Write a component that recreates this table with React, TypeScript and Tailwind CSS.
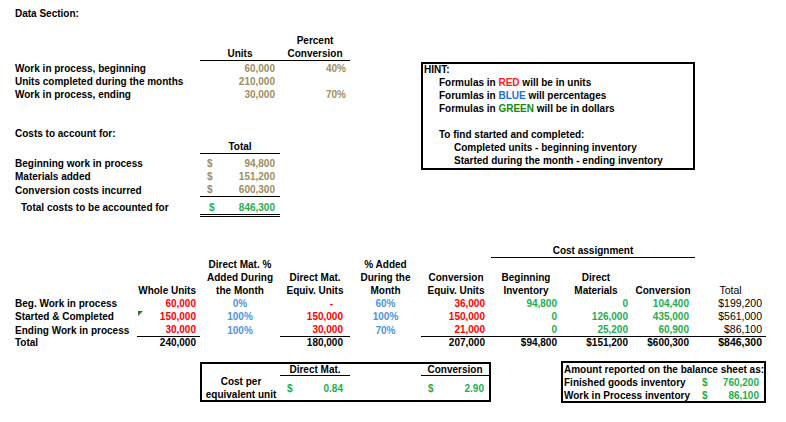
import type { ReactNode } from 'react';

const GRID = 'grid grid-cols-[137px_63px_80px_70px_71px_70px_70px_70px_64px_71px]';
const TOP = 'grid grid-cols-[200px_80px_70px]';

const Cell = ({ className = '', children }: { className?: string; children?: ReactNode }) => (
  <div className={`flex items-center whitespace-nowrap ${className}`}>{children}</div>
);

const UnitRow = ({ h, label, units, pct }: { h: string; label: string; units: string; pct?: string }) => (
  <div className={`${TOP} ${h}`}>
    <Cell className="pl-[15px]">{label}</Cell>
    <Cell className="justify-end pr-[5px] text-[#9c8e5e]">{units}</Cell>
    <Cell className="justify-end pr-[4px] text-[#9c8e5e]">{pct}</Cell>
  </div>
);

const CostRow = ({ h, label, value, line }: { h: string; label: string; value: string; line?: boolean }) => (
  <div className={`${TOP} ${h}`}>
    <Cell className="pl-[15px]">{label}</Cell>
    <Cell className={`justify-between pl-[7px] pr-[5px] text-[#9c8e5e] ${line ? 'border-b border-black' : ''}`}>
      <span>$</span>
      <span>{value}</span>
    </Cell>
  </div>
);

interface DataRowProps {
  label: string;
  whole: string;
  dmPct: string;
  dmEq: ReactNode;
  cvPct: string;
  cvEq: string;
  beg: string;
  dm: string;
  cv: string;
  total: string;
  line?: boolean;
  flag?: boolean;
}

const DataRow = ({ label, whole, dmPct, dmEq, cvPct, cvEq, beg, dm, cv, total, line, flag }: DataRowProps) => {
  const b = line ? 'border-b border-black' : '';
  return (
    <div className={`${GRID} h-[13px]`}>
      <Cell className="pl-[15px]">{label}</Cell>
      <Cell className={`relative justify-end pr-[4px] text-[#ff0000] ${b}`}>
        {flag && (
          <span className="absolute left-[1px] top-[1px] w-0 h-0 border-t-[5px] border-t-[#2a7a1e] border-r-[5px] border-r-transparent" />
        )}
        {whole}
      </Cell>
      <Cell className="justify-center text-[#5095e0]">{dmPct}</Cell>
      <Cell className={`justify-end pr-[7px] text-[#ff0000] ${b}`}>{dmEq}</Cell>
      <Cell className="justify-center text-[#5095e0]">{cvPct}</Cell>
      <Cell className={`justify-end pr-[6px] text-[#ff0000] ${b}`}>{cvEq}</Cell>
      <Cell className={`justify-end pr-[4px] text-[#1fae4f] ${b}`}>{beg}</Cell>
      <Cell className={`justify-end pr-[3px] text-[#1fae4f] ${b}`}>{dm}</Cell>
      <Cell className={`justify-end pr-[6px] text-[#1fae4f] ${b}`}>{cv}</Cell>
      <Cell className={`justify-end pr-[4px] font-normal text-[10.5px] ${b}`}>{total}</Cell>
    </div>
  );
};

export default function App() {
  return (
    <div className="w-[786px] h-[422px] overflow-hidden bg-white text-black font-bold text-[10px] leading-[13px] font-['Liberation_Sans',Arial,sans-serif]">
      {/* data section + hint */}
      <div className="flex items-start">
        <div className="w-[350px] shrink-0">
          <div className="h-[33px] pt-[7px] pl-[15px]">Data Section:</div>
          <div className={`${TOP} h-[14px]`}>
            <Cell />
            <Cell />
            <Cell className="justify-center">Percent</Cell>
          </div>
          <div className={`${TOP} h-[14px]`}>
            <Cell />
            <Cell className="justify-center border-b border-black">Units</Cell>
            <Cell className="justify-center border-b border-black">Conversion</Cell>
          </div>
          <UnitRow h="h-[14px]" label="Work in process, beginning" units="60,000" pct="40%" />
          <UnitRow h="h-[13px]" label="Units completed during the months" units="210,000" />
          <UnitRow h="h-[13px]" label="Work in process, ending" units="30,000" pct="70%" />
          <div className="h-[26px]" />
          <div className="h-[13px] pl-[15px] flex items-center">Costs to account for:</div>
          <div className={`${TOP} h-[13px]`}>
            <Cell />
            <Cell className="justify-center border-b border-black">Total</Cell>
          </div>
          <div className="h-[4px]" />
          <CostRow h="h-[13px]" label="Beginning work in process" value="94,800" />
          <CostRow h="h-[13px]" label="Materials added" value="151,200" />
          <CostRow h="h-[14px]" label="Conversion costs incurred" value="600,300" line />
          <div className={`${TOP} h-[20px]`}>
            <Cell className="pl-[21px] pt-[3px] pb-[3px]">Total costs to be accounted for</Cell>
            <Cell className="justify-between pl-[9px] pr-[5px] pt-[3px] text-[#1fae4f] border-b-[3px] border-double border-black">
              <span>$</span>
              <span>846,300</span>
            </Cell>
          </div>
        </div>

        <div className="ml-[71px] mt-[62px] w-[274px] h-[108px] shrink-0 border-2 border-black">
          <div className="-mt-[1px] whitespace-nowrap [&>div]:h-[13px] [&>div]:flex [&>div]:items-center">
            <div className="pl-[1px]">HINT:</div>
            <div className="pl-[16px]">
              Formulas in&nbsp;<span className="text-[#ff1a1a]">RED</span>&nbsp;will be in units
            </div>
            <div className="pl-[16px]">
              Forumlas in&nbsp;<span className="text-[#1f6fd6]">BLUE</span>&nbsp;will percentages
            </div>
            <div className="pl-[16px]">
              Formulas in&nbsp;<span className="text-[#138a13]">GREEN</span>&nbsp;will be in dollars
            </div>
            <div />
            <div className="pl-[16px]">To find started and completed:</div>
            <div className="pl-[31px]">Completed units - beginning inventory</div>
            <div className="pl-[31px]">Started during the month - ending inventory</div>
          </div>
        </div>
      </div>

      {/* equivalent units + cost assignment */}
      <div className="h-[27px]" />
      <div className={`${GRID} h-[13px]`}>
        <Cell className="col-start-7 col-span-3 justify-center border-b border-black">Cost assignment</Cell>
      </div>
      <div className={`${GRID} h-[14px]`}>
        <Cell className="col-start-3 justify-center">Direct Mat. %</Cell>
        <Cell className="col-start-5 justify-center">% Added</Cell>
      </div>
      <div className={`${GRID} h-[13px]`}>
        <Cell className="col-start-3 justify-center">Added During</Cell>
        <Cell className="justify-center">Direct Mat.</Cell>
        <Cell className="justify-center">During the</Cell>
        <Cell className="justify-center">Conversion</Cell>
        <Cell className="justify-center">Beginning</Cell>
        <Cell className="justify-center">Direct</Cell>
      </div>
      <div className={`${GRID} h-[13px]`}>
        <Cell />
        <Cell className="justify-end pr-[4px]">Whole Units</Cell>
        <Cell className="justify-center">the Month</Cell>
        <Cell className="justify-center">Equiv. Units</Cell>
        <Cell className="justify-center">Month</Cell>
        <Cell className="justify-center">Equiv. Units</Cell>
        <Cell className="justify-center">Inventory</Cell>
        <Cell className="justify-center">Materials</Cell>
        <Cell className="justify-center">Conversion</Cell>
        <Cell className="justify-center font-normal text-[10.5px]">Total</Cell>
      </div>
      <DataRow
        label="Beg. Work in process"
        whole="60,000"
        dmPct="0%"
        dmEq={<span className="mr-[10px]">-</span>}
        cvPct="60%"
        cvEq="36,000"
        beg="94,800"
        dm="0"
        cv="104,400"
        total="$199,200"
      />
      <DataRow
        label="Started & Completed"
        whole="150,000"
        dmPct="100%"
        dmEq="150,000"
        cvPct="100%"
        cvEq="150,000"
        beg="0"
        dm="126,000"
        cv="435,000"
        total="$561,000"
        flag
      />
      <DataRow
        label="Ending Work in process"
        whole="30,000"
        dmPct="100%"
        dmEq="30,000"
        cvPct="70%"
        cvEq="21,000"
        beg="0"
        dm="25,200"
        cv="60,900"
        total="$86,100"
        line
      />
      <div className={`${GRID} h-[13px]`}>
        <Cell className="pl-[15px]">Total</Cell>
        <Cell className="justify-end pr-[4px]">240,000</Cell>
        <Cell />
        <Cell className="justify-end pr-[7px]">180,000</Cell>
        <Cell />
        <Cell className="justify-end pr-[6px]">207,000</Cell>
        <Cell className="justify-end pr-[4px]">$94,800</Cell>
        <Cell className="justify-end pr-[3px]">$151,200</Cell>
        <Cell className="justify-end pr-[6px]">$600,300</Cell>
        <Cell className="justify-end pr-[4px] text-[10.5px]">$846,300</Cell>
      </div>

      {/* unit costs + balance sheet */}
      <div className="h-[12px]" />
      <div className={`${GRID} items-start`}>
        <div className="col-start-3 col-span-4 mt-[1px] h-[40px] border-2 border-black grid grid-cols-[78px_70px_71px_68px] grid-rows-[12px_24px]">
          <div />
          <Cell className="justify-center border-b border-black">Direct Mat.</Cell>
          <div />
          <Cell className="justify-center border-b border-black">Conversion</Cell>
          <div className="flex flex-col items-center justify-center leading-[13px] whitespace-nowrap">
            <span>Cost per</span>
            <span>equivalent unit</span>
          </div>
          <Cell className="justify-between pl-[7px] pr-[7px] text-[#1fae4f]">
            <span>$</span>
            <span>0.84</span>
          </Cell>
          <div />
          <Cell className="justify-between pl-[7px] pr-[5px] text-[#1fae4f]">
            <span>$</span>
            <span>2.90</span>
          </Cell>
        </div>
        <div className="col-start-8 col-span-3 h-[42px] border-2 border-black grid grid-cols-[132px_69px] grid-rows-[13px_13px_12px]">
          <Cell className="col-span-2 pl-[1px]">Amount reported on the balance sheet as:</Cell>
          <Cell className="pl-[1px]">Finished goods inventory</Cell>
          <Cell className="justify-between pl-[7px] pr-[5px] text-[#1fae4f]">
            <span>$</span>
            <span>760,200</span>
          </Cell>
          <Cell className="pl-[1px]">Work in Process inventory</Cell>
          <Cell className="justify-between pl-[7px] pr-[5px] text-[#1fae4f]">
            <span>$</span>
            <span>86,100</span>
          </Cell>
        </div>
      </div>
    </div>
  );
}
